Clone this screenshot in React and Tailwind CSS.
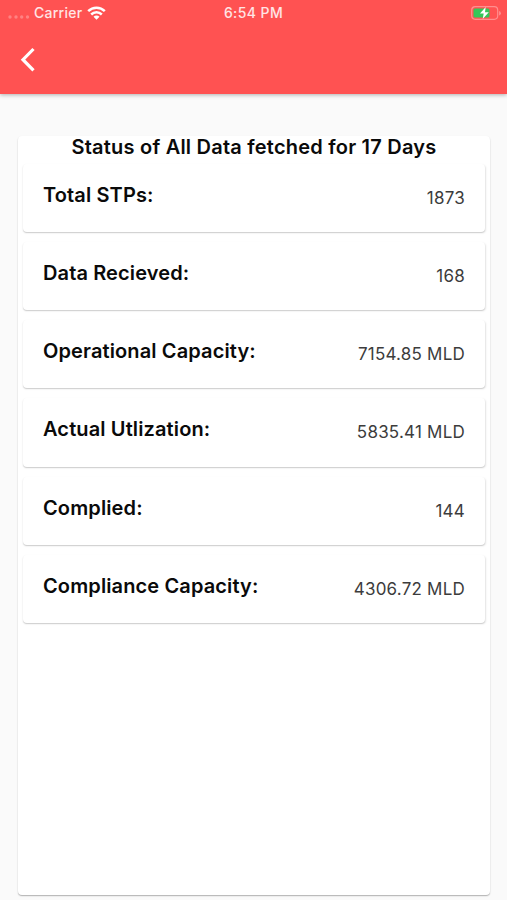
import { useState } from "react";

const stats = [
    { label: "Total STPs:", value: "1873" },
    { label: "Data Recieved:", value: "168" },
    { label: "Operational Capacity:", value: "7154.85 MLD" },
    { label: "Actual Utlization:", value: "5835.41 MLD" },
    { label: "Complied:", value: "144" },
    { label: "Compliance Capacity:", value: "4306.72 MLD" },
];

function StatusBar() {
    return (
        <div className="grid grid-cols-3 items-center h-[26px] text-sm font-medium text-white/85">
            <div className="flex items-center pl-2">
                <svg className="mt-2" width="22" height="6" viewBox="0 0 22 6" fill="white" fillOpacity="0.28">
                    <circle cx="2" cy="3" r="1.7" />
                    <circle cx="8" cy="3" r="1.7" />
                    <circle cx="13.700" cy="3" r="1.7" />
                    <circle cx="19.500" cy="3" r="1.7" />
                </svg>
                <span className="ml-1 tracking-[0.25px]">Carrier</span>
                <svg className="ml-[5px]" width="19" height="14" viewBox="0 0 19 14" fill="none" stroke="white" strokeWidth="2.5">
                    <path d="M1.200 5.200a11.700 11.700 0 0 1 16.600 0" />
                    <path d="M4.200 8.500a7.500 7.500 0 0 1 10.600 0" />
                    <path d="M9.500 13.800l-3-3a4.200 4.200 0 0 1 6 0z" fill="white" stroke="none" />
                </svg>
            </div>
            <span className="text-center tracking-[0.4px]">6:54 PM</span>
            <svg className="justify-self-end mr-[5px]" width="31" height="14" viewBox="0 0 31 14">
                <rect x="0.7" y="0.7" width="26" height="12.600" rx="3.5" fill="none" stroke="white" strokeOpacity="0.35" strokeWidth="1.2" />
                <rect x="2.500" y="2.500" width="16" height="9" rx="1.5" fill="#34c759" />
                <path d="M28.200 5v4.500a2.400 2.400 0 0 0 0-4.500" fill="white" fillOpacity="0.4" />
                <path d="M14.700 1L9 7.500h3.700L11.700 13L17.800 6.200h-3.800z" fill="white" />
            </svg>
        </div>
    );
}

function StatCard({ label, value }) {
    return (
        <div className="flex justify-between h-[68.15px] px-5 rounded bg-white shadow-[0_1px_1px_rgba(0,0,0,0.12),0.5px_1px_2px_rgba(0,0,0,0.1)]">
            <span className="pt-[17px] text-xl leading-7 font-semibold tracking-[0.12px] text-[#0a0a0a]">{label}</span>
            <span className="pt-[21px] text-[17px] leading-[26px] tracking-[0.22px] text-[#3c3c3c]">{value}</span>
        </div>
    );
}

export default function App() {
    const [items] = useState(stats);

    return (
        <div className="flex flex-col h-[900px] w-full overflow-hidden bg-[#fafafa] font-[Inter,sans-serif]">
            <header className="h-[94px] shrink-0 bg-[#ff5252] shadow-[0_1px_4px_rgba(0,0,0,0.3)]">
                <StatusBar />
                <button className="block ml-5 mt-[21px]" aria-label="Back">
                    <svg width="16" height="26" viewBox="0 0 16 26" fill="none" stroke="white" strokeWidth="3.2">
                        <path d="M13.500 2L3 12.700l10.500 10.700" />
                    </svg>
                </button>
            </header>

            <main className="mt-[42px] ml-[18px] mr-[17px] h-[759px] shrink-0 px-[5px] rounded bg-white shadow-[0_1px_1px_rgba(0,0,0,0.2),0_1px_2px_rgba(0,0,0,0.12)]">
                <h1 className="h-7 text-center text-xl leading-[22px] font-semibold tracking-[0.22px] text-[#0a0a0a]">
                    Status of All Data fetched for 17 Days
                </h1>
                <div className="flex flex-col gap-2.5">
                    {items.map((item) => (
                        <StatCard key={item.label} label={item.label} value={item.value} />
                    ))}
                </div>
            </main>
        </div>
    );
}
